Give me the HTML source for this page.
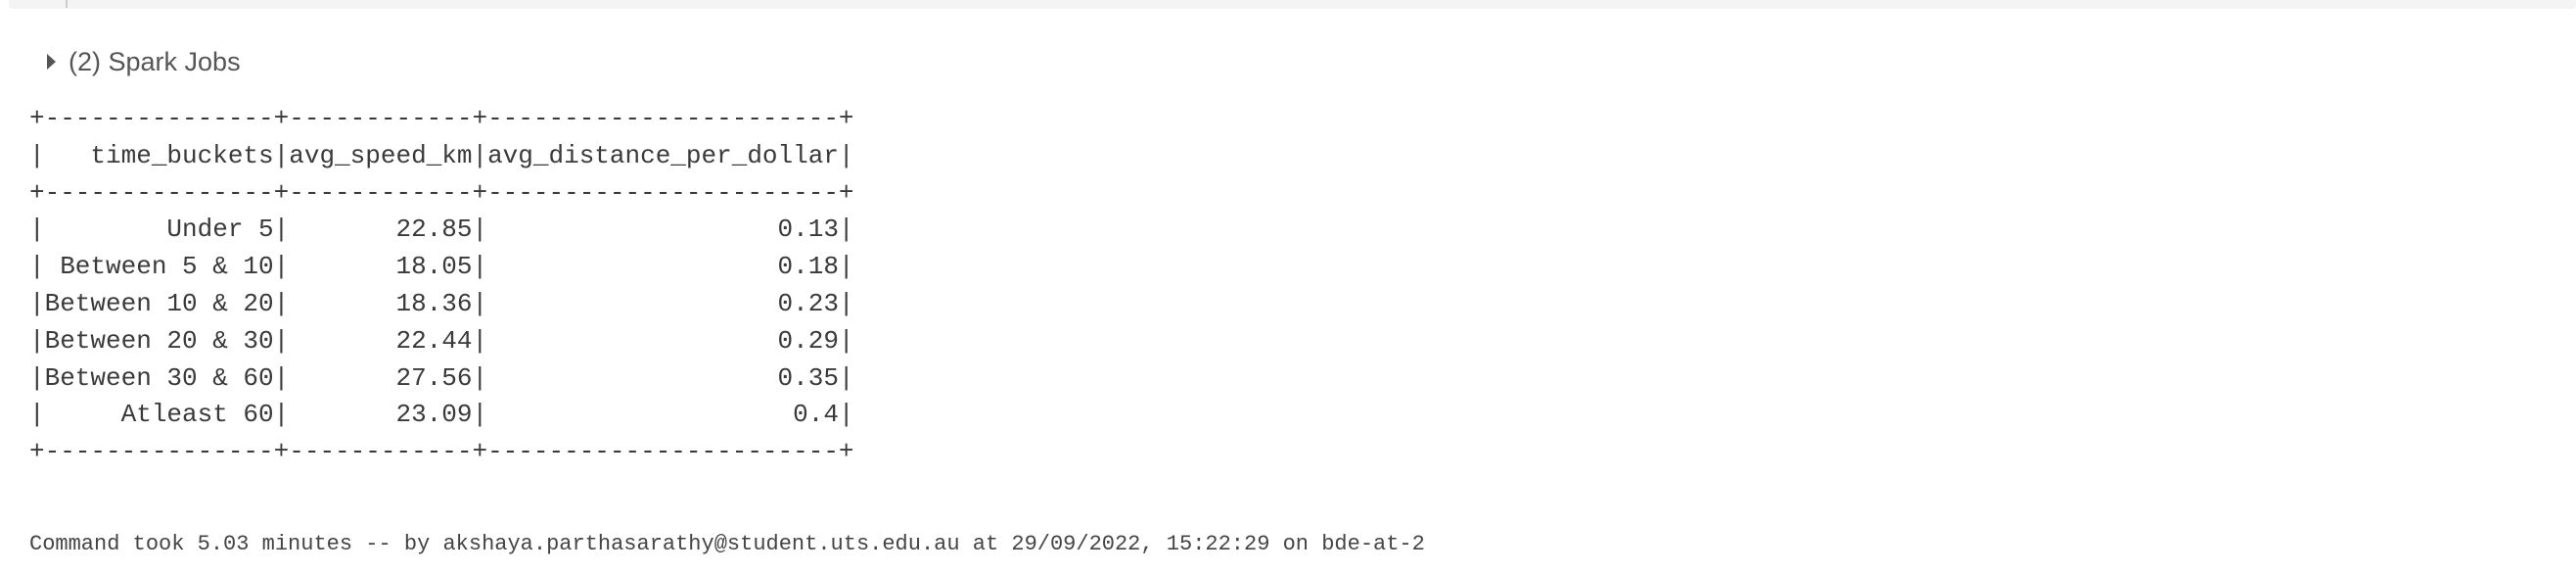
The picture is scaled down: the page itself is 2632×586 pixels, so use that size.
<!DOCTYPE html>
<html><head><style>
html,body{margin:0;padding:0;background:#fff;width:2632px;height:586px;overflow:hidden}
.bar{position:absolute;left:9px;top:0;width:2623px;height:9px;background:#f4f4f4;border-radius:0 0 4px 4px}
.bar i{position:absolute;left:58px;top:0;width:2px;height:8px;background:#ccc}
.jobs{position:absolute;left:70px;top:45px;font:27px/36px "Liberation Sans",sans-serif;color:#555}
.tri{position:absolute;left:48px;top:55px;width:0;height:0;border-top:8px solid transparent;border-bottom:8px solid transparent;border-left:9px solid #555}
pre{position:absolute;left:30px;top:103px;margin:0;font:26px/37.8px "Liberation Mono",monospace;color:#3a3a3a}
.cmd{position:absolute;left:30px;top:542px;font:22px/28px "Liberation Mono",monospace;color:#444;white-space:pre}
</style></head><body>
<div class="bar"><i></i></div>
<div class="tri"></div>
<div class="jobs">(2) Spark Jobs</div>
<pre>+---------------+------------+-----------------------+
|   time_buckets|avg_speed_km|avg_distance_per_dollar|
+---------------+------------+-----------------------+
|        Under 5|       22.85|                   0.13|
| Between 5 &amp; 10|       18.05|                   0.18|
|Between 10 &amp; 20|       18.36|                   0.23|
|Between 20 &amp; 30|       22.44|                   0.29|
|Between 30 &amp; 60|       27.56|                   0.35|
|     Atleast 60|       23.09|                    0.4|
+---------------+------------+-----------------------+</pre>
<div class="cmd">Command took 5.03 minutes -- by akshaya.parthasarathy@student.uts.edu.au at 29/09/2022, 15:22:29 on bde-at-2</div>
</body></html>
